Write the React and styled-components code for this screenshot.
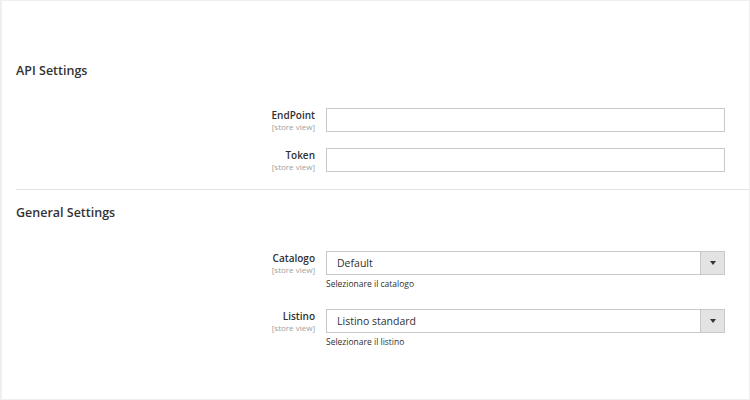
import styled, { createGlobalStyle } from 'styled-components'

const GlobalStyle = createGlobalStyle`
  html, body {
    margin: 0;
    padding: 0;
    background: #fff;
  }
  * {
    box-sizing: border-box;
  }
`

const sections = [
  {
    title: 'API Settings',
    fields: [
      { label: 'EndPoint', type: 'text' },
      { label: 'Token', type: 'text' },
    ],
  },
  {
    title: 'General Settings',
    fields: [
      { label: 'Catalogo', type: 'select', value: 'Default', note: 'Selezionare il catalogo' },
      { label: 'Listino', type: 'select', value: 'Listino standard', note: 'Selezionare il listino' },
    ],
  },
]

export default function App() {
  return (
    <>
      <GlobalStyle />
      <Page>
        {sections.map((section, i) => (
          <Section key={section.title} $first={i === 0}>
            <SectionTitle>{section.title}</SectionTitle>
            <Fields $select={section.fields[0].type === 'select'}>
              {section.fields.map((f) => (
                <Row key={f.label}>
                  <Label>
                    <LabelText>{f.label}</LabelText>
                    <Scope>[store view]</Scope>
                  </Label>
                  <Control>
                    {f.type === 'select' ? (
                      <Select>
                        <SelectValue>{f.value}</SelectValue>
                        <SelectButton>
                          <Arrow />
                        </SelectButton>
                      </Select>
                    ) : (
                      <Input type="text" />
                    )}
                    {f.note && <Note>{f.note}</Note>}
                  </Control>
                </Row>
              ))}
            </Fields>
          </Section>
        ))}
      </Page>
    </>
  )
}

const Page = styled.div`
  width: 750px;
  height: 400px;
  border: 1px solid #efefef;
  border-left-width: 2px;
  font-family: 'Open Sans', 'Liberation Sans', sans-serif;
  color: #303030;
  padding-left: 14px;
  overflow: hidden;
`

const Section = styled.div`
  padding-top: ${(p) => (p.$first ? '62px' : '15px')};
  padding-bottom: ${(p) => (p.$first ? '17px' : '0')};
  border-bottom: ${(p) => (p.$first ? '1px solid #e3e3e3' : 'none')};
`

const SectionTitle = styled.div`
  font-size: 12.5px;
  line-height: 16px;
  font-weight: 600;
  color: #333;
`

const Fields = styled.div`
  display: flex;
  flex-direction: column;
  gap: ${(p) => (p.$select ? '19px' : '16px')};
  margin-top: ${(p) => (p.$select ? '30px' : '29px')};
`

const Row = styled.div`
  display: grid;
  grid-template-columns: 299px 399px;
  column-gap: 11px;
`

const Label = styled.div`
  display: flex;
  flex-direction: column;
  align-items: flex-end;
  text-align: right;
`

const LabelText = styled.span`
  font-size: 10px;
  line-height: 14px;
  font-weight: 600;
  color: #303030;
`

const Scope = styled.span`
  font-size: 8px;
  line-height: 9px;
  color: #a0a0a0;
`

const Control = styled.div`
  display: flex;
  flex-direction: column;
`

const Input = styled.input`
  display: block;
  width: 100%;
  height: 24px;
  border: 1px solid #c8c8c8;
  background: #fff;
  outline: none;
  padding: 0 10px;
  font-family: inherit;
`

const Select = styled.div`
  display: flex;
  height: 24px;
  border: 1px solid #c8c8c8;
  background: #fff;
`

const SelectValue = styled.div`
  flex: 1;
  padding-left: 10px;
  font-size: 10.5px;
  line-height: 22px;
  color: #303030;
`

const SelectButton = styled.div`
  width: 24px;
  display: flex;
  align-items: center;
  justify-content: center;
  background: #e3e3e3;
  border-left: 1px solid #c8c8c8;
`

const Arrow = styled.span`
  width: 0;
  height: 0;
  border-left: 3px solid transparent;
  border-right: 3px solid transparent;
  border-top: 4px solid #333;
`

const Note = styled.div`
  font-size: 8.5px;
  line-height: 12px;
  margin-top: 3px;
  color: #303030;
`
